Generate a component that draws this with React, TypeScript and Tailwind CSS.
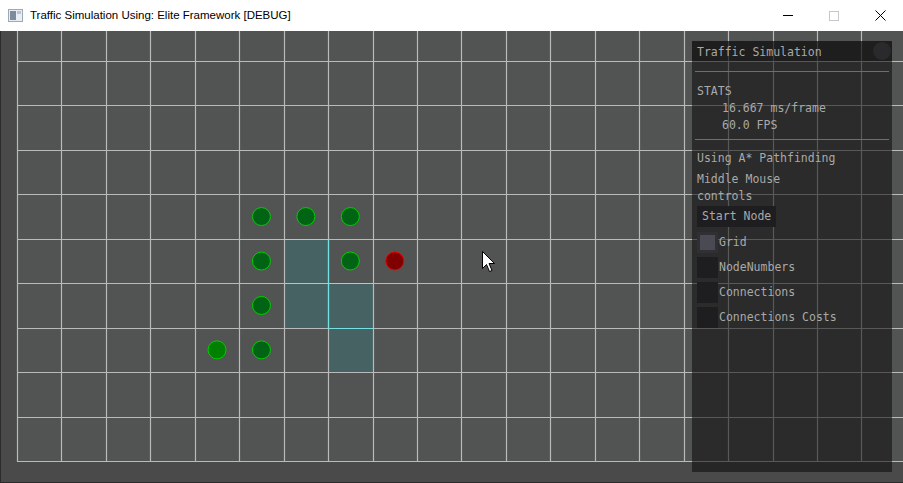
import React from 'react';

const CELL = 400 / 9;
const GX = 17; // grid left edge (px)
const GY0 = 30; // first horizontal line inside canvas (page y 61)
const GBOTTOM = 430; // bottom line (page y 461)

const vx = (k: number) => Math.round(GX + k * CELL) + 0.5;
const hy = (j: number) => Math.round(GY0 + j * CELL) + 0.5;
const cx = (k: number) => GX + (k + 0.5) * CELL;
const cy = (j: number) => GY0 + (j + 0.5) * CELL;

const nodes = [
  { c: 5, r: 3 },
  { c: 6, r: 3 },
  { c: 7, r: 3 },
  { c: 5, r: 4 },
  { c: 7, r: 4 },
  { c: 5, r: 5 },
  { c: 5, r: 6 },
];

const pathCells = [
  { c: 6, r: 4 },
  { c: 6, r: 5 },
  { c: 7, r: 5 },
  { c: 7, r: 6 },
];

const SimCanvas: React.FC = () => {
  const cols = Array.from({ length: 21 }, (_, i) => i);
  const rows = Array.from({ length: 10 }, (_, i) => i);
  return (
    <svg width={903} height={452} className="block">
      <rect x={0} y={0} width={903} height={452} fill="#4a4a4a" />
      <rect x={0} y={0} width={1} height={452} fill="#2b2b2b" />
      <rect x={0} y={451} width={903} height={1} fill="#2b2b2b" />
      <rect x={GX} y={0} width={903 - GX} height={GBOTTOM} fill="#525453" />
      {pathCells.map((p, i) => (
        <rect
          key={`p-${i}`}
          x={vx(p.c)}
          y={hy(p.r)}
          width={vx(p.c + 1) - vx(p.c)}
          height={hy(p.r + 1) - hy(p.r)}
          fill="#466263"
        />
      ))}
      {cols.map(k => (
        <line key={`v-${k}`} x1={vx(k)} y1={0} x2={vx(k)} y2={GBOTTOM + 1} stroke="#bababa" strokeWidth={1.2} />
      ))}
      {rows.map(j => (
        <line key={`h-${j}`} x1={GX} y1={hy(j)} x2={903} y2={hy(j)} stroke="#bababa" strokeWidth={1.2} />
      ))}
      {/* path edges */}
      <g stroke="#74e2e2" strokeWidth={1.2}>
        <line x1={vx(6)} y1={hy(4)} x2={vx(7)} y2={hy(4)} />
        <line x1={vx(7)} y1={hy(4)} x2={vx(7)} y2={hy(6)} />
        <line x1={vx(6)} y1={hy(5)} x2={vx(8)} y2={hy(5)} />
        <line x1={vx(7)} y1={hy(6)} x2={vx(8)} y2={hy(6)} />
      </g>
      {nodes.map((n, i) => (
        <circle key={`n-${i}`} cx={cx(n.c)} cy={cy(n.r)} r={9} fill="#006414" stroke="#00cc00" strokeWidth={1} />
      ))}
      <circle cx={cx(4)} cy={cy(6)} r={9} fill="#008000" stroke="#00cc00" strokeWidth={1} />
      <circle cx={cx(8)} cy={cy(4)} r={9} fill="#800000" stroke="#ee0000" strokeWidth={1} />
      {/* mouse cursor */}
      <path
        d="M482.5 220.5 L482.5 237.5 L486.5 233.5 L489.5 240.5 L492 239.5 L489 232.5 L494.5 232.5 Z"
        fill="#ffffff"
        stroke="#000000"
        strokeWidth={1}
        strokeLinejoin="miter"
      />
    </svg>
  );
};

const Checkbox: React.FC<{ label: string; hovered?: boolean }> = ({ label, hovered }) => (
  <div className="flex items-center h-[21px]">
    <div className={`w-[21px] h-[21px] ${hovered ? 'bg-[#2f2f35] p-[3px]' : 'bg-[#1e1e21]'}`}>
      {hovered && <div className="w-full h-full bg-[#4a4a52]" />}
    </div>
    <span className="ml-[1px]">{label}</span>
  </div>
);

const DebugPanel: React.FC = () => (
  <div
    className="absolute left-[692px] top-[10px] w-[200px] h-[431px] bg-[rgba(11,11,11,0.56)] text-[#a9a9a9] text-[11.5px] leading-[17px] flex flex-col"
    style={{ fontFamily: '"DejaVu Sans Mono", "Liberation Mono", monospace' }}
  >
    <div className="h-[20px] bg-[rgba(0,0,0,0.3)] flex items-center justify-between pl-[5px] pr-[1px]">
      <span className="pt-[3px]">Traffic Simulation</span>
      <div className="w-[18px] h-[18px] rounded-full bg-[#2a2a2d]" />
    </div>
    <div className="px-[5px] flex flex-col">
      <div className="mt-[10px] h-px bg-[#6e6e72] mx-[-2px]" />
      <div className="mt-[11px]">STATS</div>
      <div className="pl-[25px]">16.667 ms/frame</div>
      <div className="pl-[25px]">60.0 FPS</div>
      <div className="mt-[5px] h-px bg-[#6e6e72] mx-[-2px]" />
      <div className="mt-[10px]">Using A* Pathfinding</div>
      <div className="mt-[4px]">Middle Mouse</div>
      <div>controls</div>
      <div className="mt-[1px] self-start h-[21px] px-[5px] bg-[#1e1e21] flex items-center">Start Node</div>
      <div className="mt-[5px] flex flex-col gap-[4px]">
        <Checkbox label="Grid" hovered />
        <Checkbox label="NodeNumbers" />
        <Checkbox label="Connections" />
        <Checkbox label="Connections Costs" />
      </div>
    </div>
  </div>
);

const TitleBar: React.FC = () => (
  <div
    className="h-[31px] bg-white flex items-center justify-between"
    style={{ fontFamily: '"Liberation Sans", Arial, sans-serif' }}
  >
    <div className="flex items-center">
      <svg width={15} height={13} className="ml-[8px]">
        <rect x={0.5} y={0.5} width={14} height={12} fill="#e8eef4" stroke="#9aaab8" />
        <rect x={2} y={2} width={6} height={9} fill="#7d8c9a" />
        <rect x={9} y={2} width={4} height={3} fill="#b9c6d2" />
      </svg>
      <span className="ml-[7px] text-[11.5px] text-black">
        Traffic Simulation Using: Elite Framework [DEBUG]
      </span>
    </div>
    <div className="flex items-center h-full">
      <div className="w-[46px] h-full flex items-center justify-center">
        <div className="w-[10px] h-px bg-black" />
      </div>
      <div className="w-[46px] h-full flex items-center justify-center">
        <div className="w-[10px] h-[10px] border border-[#c4c8cc]" />
      </div>
      <div className="w-[46px] h-full flex items-center justify-center">
        <svg width={11} height={11}>
          <path d="M0.5 0.5 L10.5 10.5 M10.5 0.5 L0.5 10.5" stroke="#000" strokeWidth={1} />
        </svg>
      </div>
    </div>
  </div>
);

const App: React.FC = () => {
  return (
    <div className="w-[903px] h-[483px] overflow-hidden bg-[#4a4a4a] flex flex-col">
      <TitleBar />
      <div className="relative h-[452px]">
        <SimCanvas />
        <DebugPanel />
      </div>
    </div>
  );
};

export default App;
